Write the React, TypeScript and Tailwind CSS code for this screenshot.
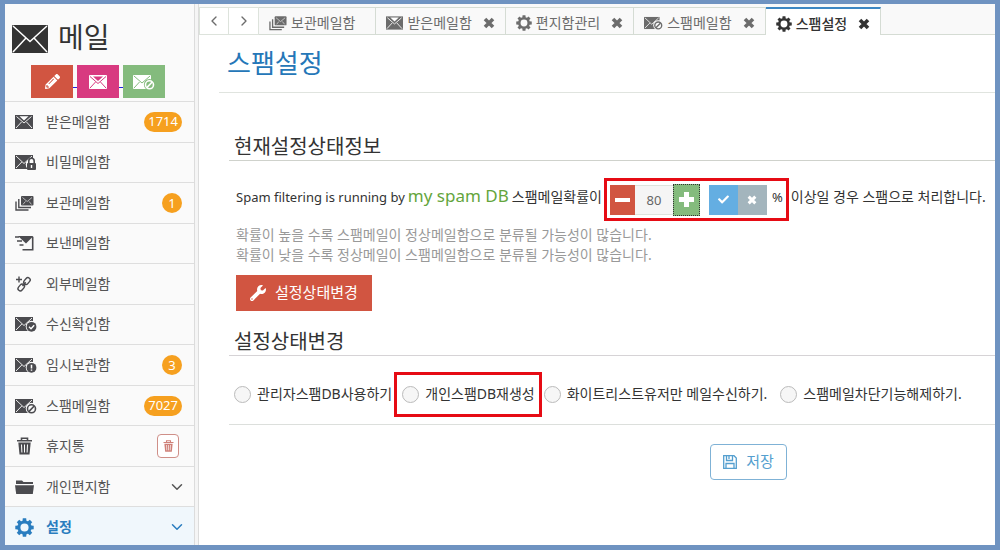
import { useState } from "react";
import type { ReactNode } from "react";
import { FaCheck, FaPencilAlt, FaWrench } from "react-icons/fa";
import { ChevronDown, ChevronLeft, ChevronRight } from "lucide-react";

type Badge = "lock" | "check" | "alert" | "ban";

function MailIcon({ badge, className = "" }: { badge?: Badge; className?: string }) {
  return (
    <svg viewBox="0 0 22 16" className={className} aria-hidden="true">
      <rect x="0" y="1" width="18" height="14" fill="currentColor" />
      <path d="M1 2l8 7.5L17 2M1 14l5.8-6M17 14l-5.8-6" fill="none" stroke="#fff" strokeWidth=".9" />
      {badge && <circle cx="16.5" cy="10.5" r="5.8" fill="#fafafa" />}
      {badge === "lock" && (
        <g>
          <rect x="12" y="9" width="9" height="7" rx="1" fill="currentColor" />
          <path d="M13.8 9V7a2.7 2.7 0 015.4 0v2" fill="none" stroke="currentColor" strokeWidth="1.6" />
          <path d="M16.5 11v3" stroke="#fff" strokeWidth="1.4" />
        </g>
      )}
      {badge === "check" && (
        <g>
          <circle cx="16.5" cy="10.8" r="4.9" fill="currentColor" />
          <path d="M14 10.8l2 2 3.2-3.6" fill="none" stroke="#fff" strokeWidth="1.3" />
        </g>
      )}
      {badge === "alert" && (
        <g>
          <circle cx="16.5" cy="10.8" r="4.9" fill="currentColor" />
          <path d="M16.5 7.8v3.6M16.5 12.4v1.4" stroke="#fff" strokeWidth="1.5" />
        </g>
      )}
      {badge === "ban" && (
        <g fill="none" stroke="currentColor" strokeWidth="1.6">
          <circle cx="16.5" cy="10.8" r="4" />
          <path d="M13.8 13.6l5.4-5.6" />
        </g>
      )}
    </svg>
  );
}

function InboxIcon({ className = "" }: { className?: string }) {
  return (
    <svg viewBox="0 0 18 16" className={className} aria-hidden="true">
      <rect x="0" y="1" width="18" height="14" fill="currentColor" />
      <path d="M4.5 2.2h9L9 6.5z" fill="#fff" />
      <path d="M1.5 2.5L9 9l7.5-6.5M1 14l5.5-6M17 14l-5.5-6" fill="none" stroke="#fff" strokeWidth=".9" />
    </svg>
  );
}

function StackIcon({ className = "" }: { className?: string }) {
  return (
    <svg viewBox="0 0 19 16" className={className} aria-hidden="true">
      <rect x="6" y="1" width="12.5" height="9.5" rx="1" fill="currentColor" />
      <path d="M7.5 2.5l4.7 4 4.8-4M8 9.4l2.5-3M16.5 9.4l-2.5-3" fill="none" stroke="#fff" strokeWidth=".6" />
      <path d="M3.8 4v8.5H16M1 6.5V15h12.5" fill="none" stroke="currentColor" strokeWidth="1.4" />
    </svg>
  );
}

function SentIcon({ className = "" }: { className?: string }) {
  return (
    <svg viewBox="0 0 19 16" className={className} aria-hidden="true">
      <path d="M3 1h15.5L11 8.5z" fill="currentColor" />
      <path d="M17.7 2v12.8H7.5M0 2h4M2 6h5M4.5 10h4" fill="none" stroke="currentColor" strokeWidth="1.6" />
    </svg>
  );
}

function ExternalIcon({ className = "" }: { className?: string }) {
  return (
    <svg viewBox="0 0 18 18" className={className} aria-hidden="true">
      <g fill="none" stroke="currentColor" strokeWidth="1.4">
        <path d="M1 4.5h6M4 1.5v6" />
        <rect x="8.2" y="3.7" width="7.5" height="4.6" rx="2.3" transform="rotate(-50 12 6)" />
        <rect x="2.5" y="10.2" width="7.5" height="4.6" rx="2.3" transform="rotate(-50 6.2 12.5)" />
        <path d="M7.5 11l3.2-3.8" />
      </g>
    </svg>
  );
}

const teeth = [0, 45, 90, 135, 180, 225, 270, 315];

function GearIcon({ className = "" }: { className?: string }) {
  return (
    <svg viewBox="0 0 20 20" className={className} aria-hidden="true">
      <circle cx="10" cy="10" r="5.9" fill="none" stroke="currentColor" strokeWidth="3.2" />
      {teeth.map((angle) => (
        <path key={angle} d="M7.9 3.5L8.2.3h3.6l.3 3.2z" fill="currentColor" transform={`rotate(${angle} 10 10)`} />
      ))}
    </svg>
  );
}

function CloseIcon({ className = "" }: { className?: string }) {
  return (
    <svg viewBox="0 0 12 12" className={className} aria-hidden="true">
      <path d="M2 2l8 8M10 2l-8 8" stroke="currentColor" strokeWidth="3.6" />
    </svg>
  );
}

function TrashIcon({ className = "" }: { className?: string }) {
  return (
    <svg viewBox="0 0 16 18" className={className} aria-hidden="true">
      <path d="M.5 3.8h15M5 3.5V1.2h6v2.3" fill="none" stroke="currentColor" strokeWidth="1.6" />
      <path d="M1.8 5.5h12.4L13 17.5H3z" fill="currentColor" />
      <path d="M5 7.5l.4 8M8 7.5v8M11 7.5l-.4 8" stroke="#fff" strokeWidth="1" />
    </svg>
  );
}

function FolderIcon({ className = "" }: { className?: string }) {
  return (
    <svg viewBox="0 0 19 16" className={className} aria-hidden="true">
      <path d="M1 5V1.5h6L8.5 3H18v2z" fill="currentColor" />
      <path d="M0 6.3h19L17.8 15H1.2z" fill="currentColor" />
    </svg>
  );
}

function SaveIcon({ className = "" }: { className?: string }) {
  return (
    <svg viewBox="0 0 14 14" className={className} aria-hidden="true">
      <g fill="none" stroke="currentColor" strokeWidth="1.3">
        <path d="M.7.7H11L13.3 3v10.3H.7z" />
        <path d="M3 13V8.5h8V13M3.5 1v4.5h6V1M6 1v3" />
      </g>
    </svg>
  );
}

const menu: { label: string; icon: ReactNode; count?: number; extra?: "trash" | "open"; active?: boolean }[] = [
  { label: "받은메일함", icon: <InboxIcon className="h-4 w-[18px]" />, count: 1714 },
  { label: "비밀메일함", icon: <MailIcon badge="lock" className="h-4 w-[22px]" /> },
  { label: "보관메일함", icon: <StackIcon className="h-4 w-[19px]" />, count: 1 },
  { label: "보낸메일함", icon: <SentIcon className="h-4 w-[19px]" /> },
  { label: "외부메일함", icon: <ExternalIcon className="size-[18px]" /> },
  { label: "수신확인함", icon: <MailIcon badge="check" className="h-4 w-[22px]" /> },
  { label: "임시보관함", icon: <MailIcon badge="alert" className="h-4 w-[22px]" />, count: 3 },
  { label: "스팸메일함", icon: <MailIcon badge="ban" className="h-4 w-[22px]" />, count: 7027 },
  { label: "휴지통", icon: <TrashIcon className="h-[18px] w-[19px]" />, extra: "trash" },
  { label: "개인편지함", icon: <FolderIcon className="h-4 w-[19px]" />, extra: "open" },
  { label: "설정", icon: <GearIcon className="size-[19px]" />, extra: "open", active: true },
];

function Sidebar() {
  return (
    <aside className="flex w-[190px] shrink-0 flex-col border-r border-[#dcdcdc] bg-[#fafafa]">
      <div className="flex h-[58px] shrink-0 items-center gap-[10px] pt-2 pl-[7px] text-[#333]">
        <svg viewBox="0 0 36 28" className="mt-1 h-7 w-9" aria-hidden="true">
          <rect width="36" height="28" rx="1" fill="currentColor" />
          <path d="M1 1l17 15.5L35 1M1 27l13-14M35 27L22 13" fill="none" stroke="#fff" strokeWidth="1.5" />
        </svg>
        <h1 className="text-[28px] leading-8">메일</h1>
      </div>
      <div className="flex h-[39px] shrink-0 items-center pl-[26px] text-white">
        <button aria-label="편지쓰기" className="flex h-[33px] w-[42px] items-center justify-center bg-[#d15541]">
          <FaPencilAlt className="size-[15px]" />
        </button>
        <span className="mt-3 h-px w-1 bg-[#2020e0]" />
        <button aria-label="받은메일" className="flex h-[33px] w-[42px] items-center justify-center bg-[#d83a80]">
          <svg viewBox="0 0 18 16" className="h-4 w-[18px]" aria-hidden="true">
            <rect y="1" width="18" height="14" rx="1" fill="#fff" />
            <path d="M4 2.5h10L9 7z" fill="#d83a80" />
            <path d="M1 2.5l8 7 8-7M1 14l5.5-6M17 14l-5.5-6" fill="none" stroke="#d83a80" />
          </svg>
        </button>
        <span className="mt-3 h-px w-1 bg-[#2020e0]" />
        <button aria-label="스팸메일" className="flex h-[33px] w-[42px] items-center justify-center bg-[#84bb7d]">
          <svg viewBox="0 0 22 16" className="h-4 w-[22px]" aria-hidden="true">
            <rect y="1" width="18" height="14" rx="1" fill="#fff" />
            <path d="M1 2l8 7 8-7M1 14l5.5-6" fill="none" stroke="#84bb7d" />
            <circle cx="16.5" cy="10.5" r="5.6" fill="#84bb7d" />
            <circle cx="16.5" cy="10.8" r="4" fill="none" stroke="#fff" strokeWidth="1.6" />
            <path d="M13.8 13.6l5.4-5.6" stroke="#fff" strokeWidth="1.6" />
          </svg>
        </button>
      </div>
      <nav className="grid min-h-[446px] shrink-0 auto-rows-fr text-sm text-[#555]">
        {menu.map((item) => (
          <div
            key={item.label}
            className={`flex items-center border-t border-[#dedede] pr-3 pl-[10px] ${item.active ? "bg-[#f0f7fc] text-[#2a7dbf]" : ""}`}
          >
            <a href="#" className="flex flex-1 items-center gap-[9px]">
              <span className={`flex w-[22px] ${item.active ? "" : "text-[#4b4b4f]"}`}>{item.icon}</span>
              <span className={item.active ? "font-bold" : ""}>{item.label}</span>
            </a>
            {item.count !== undefined && (
              <span className="flex h-5 min-w-5 items-center justify-center rounded-full bg-[#f6a01f] px-1 text-[13px] text-white">
                {item.count}
              </span>
            )}
            {item.extra === "trash" && (
              <button
                aria-label="휴지통 비우기"
                className="mr-[3px] flex h-6 w-[22px] items-center justify-center rounded border border-[#cf8f88] bg-white text-[#cf8078]"
              >
                <TrashIcon className="h-3 w-[11px]" />
              </button>
            )}
            {item.extra === "open" && <ChevronDown className="-mr-1 size-[18px]" />}
          </div>
        ))}
      </nav>
    </aside>
  );
}

const tabs: { label: string; icon: ReactNode; closable?: boolean; active?: boolean }[] = [
  { label: "보관메일함", icon: <StackIcon className="h-4 w-[18px]" /> },
  { label: "받은메일함", icon: <InboxIcon className="h-4 w-[17px]" />, closable: true },
  { label: "편지함관리", icon: <GearIcon className="size-4" />, closable: true },
  { label: "스팸메일함", icon: <MailIcon badge="ban" className="h-[14px] w-[19px]" />, closable: true },
  { label: "스팸설정", icon: <GearIcon className="size-4" />, closable: true, active: true },
];

function TabBar() {
  return (
    <div className="flex h-[31px] bg-[#f9f9f9] pt-[3px] text-sm text-[#6c6c6c]">
      <button aria-label="이전 탭" className="flex w-[30px] items-center justify-center border border-[#dde3dc] bg-white">
        <ChevronLeft className="size-4" />
      </button>
      <button aria-label="다음 탭" className="flex w-[30px] items-center justify-center border-y border-r border-[#dde3dc] bg-white">
        <ChevronRight className="size-4" />
      </button>
      {tabs.map((tab) => (
        <div
          key={tab.label}
          className={`flex shrink-0 items-center border-r border-[#d5dcd4] pt-[3px] pl-[10px] whitespace-nowrap ${
            tab.active ? "border-t-2 border-t-[#3d87c3] bg-white text-[#333]" : "border-y"
          } ${tab.closable ? "pr-[10px]" : "pr-5"}`}
        >
          <a href="#" className={`flex items-center gap-1 ${tab.active ? "font-medium" : ""}`}>
            {tab.icon}
            {tab.label}
          </a>
          {tab.closable && (
            <button aria-label={`${tab.label} 닫기`} className="ml-[11px]">
              <CloseIcon className="size-3" />
            </button>
          )}
        </div>
      ))}
      <div className="flex-1 border-b border-[#d5dcd4]" />
    </div>
  );
}

function Radio({ id, label, picked, onPick }: { id: string; label: string; picked: boolean; onPick: () => void }) {
  return (
    <span className="flex items-center gap-[6px]">
      <input
        id={id}
        type="radio"
        name="spam-mode"
        checked={picked}
        onChange={onPick}
        className="size-[17px] shrink-0 appearance-none rounded-full border border-[#bbb] bg-[#f6f6f6] checked:border-[5px] checked:border-[#3d87c3]"
      />
      <label htmlFor={id}>{label}</label>
    </span>
  );
}

export default function App() {
  const [rate, setRate] = useState(80);
  const [mode, setMode] = useState("");

  return (
    <div className="flex h-screen overflow-hidden border-[5px] border-t-4 border-[#6f93c1] bg-[#f5f5f5] font-['Noto_Sans','Noto_Sans_CJK_KR',sans-serif]">
      <Sidebar />
      <main className="ml-[3px] min-w-0 flex-1 border-l border-[#dcdcdc] bg-white text-sm whitespace-nowrap text-[#333]">
        <TabBar />
        <h2 className="ml-5 flex h-[58px] items-center border-b border-[#e0e4df] pl-2 text-[26px] text-[#2577b8]">스팸설정</h2>

        <section className="ml-[30px] pt-10">
          <h3 className="border-b border-[#cfd2cc] pl-[5px] text-[20px] leading-[27px]">현재설정상태정보</h3>
          <div className="mt-[17px] flex items-center pl-[7px]">
            <p className="mr-[2px] flex items-baseline gap-[3px] pb-2">
              <span className="text-[13px]">Spam filtering is running by</span>
              <span className="text-[17px] leading-6 text-[#64a53c]">my spam DB</span>
              <span>스팸메일확률이</span>
            </p>
            <div className="flex h-[43px] items-center border-[3px] border-[#e60b14] px-[3px]">
              <button
                aria-label="확률 낮추기"
                onClick={() => setRate(Math.max(0, rate - 1))}
                className="flex h-[30px] w-[25px] items-center justify-center bg-[#d15541]"
              >
                <span className="h-1 w-[15px] bg-white" />
              </button>
              <input
                aria-label="스팸메일확률"
                value={rate}
                onChange={(event) => setRate(Number(event.target.value) || 0)}
                className="h-[30px] w-[38px] border-y border-[#dde3dc] bg-[#f5f5f5] text-center text-[13px] text-[#666]"
              />
              <button
                aria-label="확률 높이기"
                onClick={() => setRate(Math.min(100, rate + 1))}
                className="flex h-8 w-[27px] items-center justify-center border border-dotted border-[#333] bg-[#84bb7d]"
              >
                <svg viewBox="0 0 15 15" className="size-[15px]" aria-hidden="true">
                  <path d="M5 0h5v5h5v5h-5v5H5v-5H0V5h5z" fill="#fff" />
                </svg>
              </button>
              <button aria-label="적용" className="ml-[9px] flex h-[30px] w-[29px] items-center justify-center bg-[#64aee2] text-white">
                <FaCheck className="size-[11px]" />
              </button>
              <button aria-label="취소" className="flex h-[30px] w-[29px] items-center justify-center bg-[#a3b5bd] text-white">
                <CloseIcon className="size-[10px]" />
              </button>
              <span className="ml-[5px] pb-1 text-[13px]">%</span>
            </div>
            <span className="ml-[2px] pb-[6px]">이상일 경우 스팸으로 처리합니다.</span>
          </div>
          <p className="mt-1 pl-[7px] leading-5 text-[#999]">
            확률이 높을 수록 스팸메일이 정상메일함으로 분류될 가능성이 많습니다.
            <br />
            확률이 낮을 수록 정상메일이 스팸메일함으로 분류될 가능성이 많습니다.
          </p>
          <button className="mt-[10px] ml-[7px] flex h-9 items-center gap-[9px] bg-[#d15541] px-[14px] text-[15px] text-white">
            <FaWrench className="size-4" />
            설정상태변경
          </button>
        </section>

        <section className="ml-[30px] pt-[17px]">
          <h3 className="border-b border-[#d6d3d6] pl-[5px] text-[20px] leading-[27px]">설정상태변경</h3>
          <div className="flex h-[69px] items-center border-b border-[#dcdfdc] pt-[8px] pl-[5px]">
            <Radio id="mode-admin" label="관리자스팸DB사용하기" picked={mode === "admin"} onPick={() => setMode("admin")} />
            <div className="mr-[2px] ml-[2px] flex h-[45px] items-center border-[3px] border-[#e60b14] px-1 pl-[5px]">
              <Radio id="mode-personal" label="개인스팸DB재생성" picked={mode === "personal"} onPick={() => setMode("personal")} />
            </div>
            <Radio id="mode-white" label="화이트리스트유저만 메일수신하기." picked={mode === "white"} onPick={() => setMode("white")} />
            <span className="ml-[13px]">
              <Radio id="mode-off" label="스팸메일차단기능해제하기." picked={mode === "off"} onPick={() => setMode("off")} />
            </span>
          </div>
          <div className="flex justify-center pt-[19px] pl-[273px]">
            <button className="flex h-9 items-center gap-[9px] rounded border border-[#7fb2d6] px-3 text-[15px] text-[#559fcf]">
              <SaveIcon className="size-[14px]" />
              저장
            </button>
          </div>
        </section>
      </main>
    </div>
  );
}
